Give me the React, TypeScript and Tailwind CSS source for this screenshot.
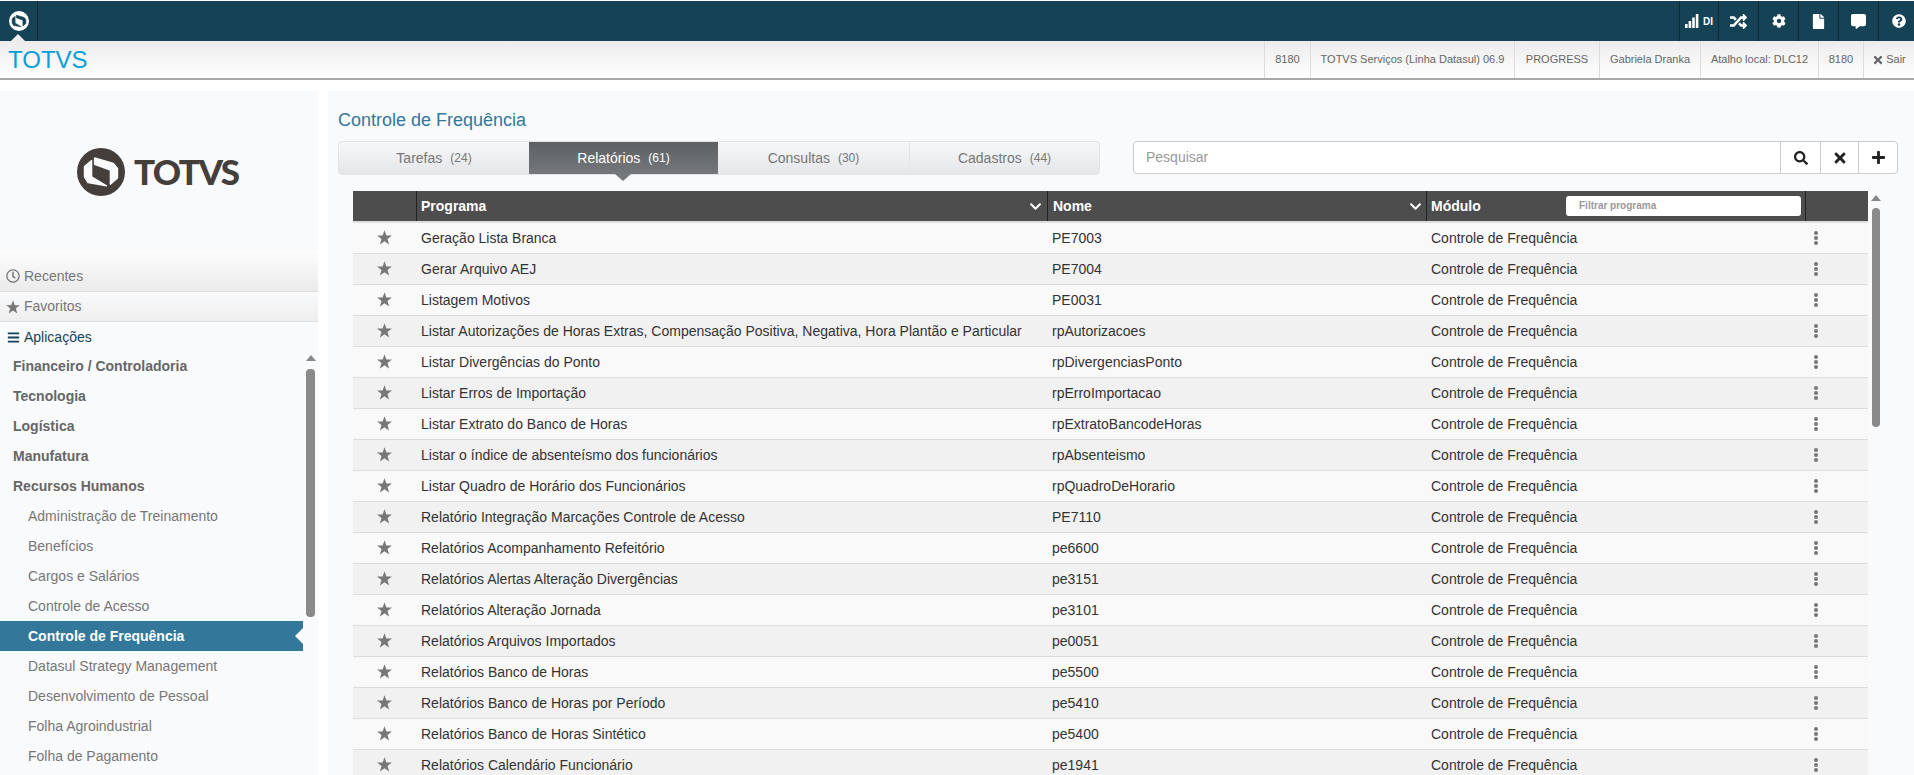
import { FaRegClock, FaBars, FaSearch, FaTimes, FaPlus, FaRandom, FaCog, FaFile, FaCommentAlt, FaQuestionCircle, FaChevronDown } from 'react-icons/fa';

const font = "font-['Liberation_Sans',Arial,sans-serif]";

const rows = [
  ['Geração Lista Branca', 'PE7003'],
  ['Gerar Arquivo AEJ', 'PE7004'],
  ['Listagem Motivos', 'PE0031'],
  ['Listar Autorizações de Horas Extras, Compensação Positiva, Negativa, Hora Plantão e Particular', 'rpAutorizacoes'],
  ['Listar Divergências do Ponto', 'rpDivergenciasPonto'],
  ['Listar Erros de Importação', 'rpErroImportacao'],
  ['Listar Extrato do Banco de Horas', 'rpExtratoBancodeHoras'],
  ['Listar o índice de absenteísmo dos funcionários', 'rpAbsenteismo'],
  ['Listar Quadro de Horário dos Funcionários', 'rpQuadroDeHorario'],
  ['Relatório Integração Marcações Controle de Acesso', 'PE7110'],
  ['Relatórios Acompanhamento Refeitório', 'pe6600'],
  ['Relatórios Alertas Alteração Divergências', 'pe3151'],
  ['Relatórios Alteração Jornada', 'pe3101'],
  ['Relatórios Arquivos Importados', 'pe0051'],
  ['Relatórios Banco de Horas', 'pe5500'],
  ['Relatórios Banco de Horas por Período', 'pe5410'],
  ['Relatórios Banco de Horas Sintético', 'pe5400'],
  ['Relatórios Calendário Funcionário', 'pe1941'],
];

const topGroups = ['Financeiro / Controladoria', 'Tecnologia', 'Logística', 'Manufatura', 'Recursos Humanos'];
const subItems = [
  'Administração de Treinamento',
  'Benefícios',
  'Cargos e Salários',
  'Controle de Acesso',
  'Controle de Frequência',
  'Datasul Strategy Management',
  'Desenvolvimento de Pessoal',
  'Folha Agroindustrial',
  'Folha de Pagamento',
];

const tabs = [
  ['Tarefas', '(24)', 'w-[190px]'],
  ['Relatórios', '(61)', 'w-[189px]'],
  ['Consultas', '(30)', 'w-[191px]'],
  ['Cadastros', '(44)', 'w-[190px]'],
];

const infoCells = [
  ['8180', 'w-[46px]'],
  ['TOTVS Serviços (Linha Datasul) 06.9', 'w-[204px]'],
  ['PROGRESS', 'w-[85px]'],
  ['Gabriela Dranka', 'w-[101px]'],
  ['Atalho local: DLC12', 'w-[118px]'],
  ['8180', 'w-[45px]'],
];

const topIcons = [
  { Icon: FaRandom, size: 'text-[17px]' },
  { Icon: FaCog, size: 'text-[14px]' },
  { Icon: FaFile, size: 'text-[15px]' },
  { Icon: FaCommentAlt, size: 'text-[15px]' },
  { Icon: FaQuestionCircle, size: 'text-[14px]' },
];

function Logo({ className, ring, inner }: { className: string; ring: string; inner: string }) {
  return (
    <svg viewBox="0 0 48 48" className={className}>
      <circle cx="24" cy="24" r="24" fill={ring} />
      <g fill={inner} stroke={inner} strokeWidth="1.4" strokeLinejoin="round">
        <polygon points="7.5,18.5 14.6,12.6 14.6,28.8 29.5,37.8 11,34.6 7.5,29" />
        <polygon points="17.6,10 36.4,15.4 40.5,20.4 40.5,30 33.4,36.2 33.4,22 17.6,16.4" />
      </g>
    </svg>
  );
}

function Star({ className }: { className: string }) {
  return (
    <svg viewBox="0 0 24 24" className={className} fill="currentColor">
      <polygon points="12,0.5 15,8.8 23.8,8.8 16.8,14.2 19.4,23 12,17.8 4.6,23 7.2,14.2 0.2,8.8 9,8.8" />
    </svg>
  );
}

function Scrollbar({ className, thumb, gap }: { className: string; thumb: string; gap: string }) {
  return (
    <div className={`flex flex-col items-center ${className}`}>
      <div className={`mt-[4px] w-0 h-0 border-x-[5px] border-x-transparent border-b-[6px] border-b-[#888] ${gap}`} />
      <div className={`rounded-[4px] bg-[#8a8a8a] ${thumb}`} />
    </div>
  );
}

export default function App() {
  return (
    <div className={`h-[775px] w-[1914px] overflow-hidden bg-white ${font} text-[14px] text-[#333]`}>
      {/* Top bar */}
      <div className="mt-[1px] h-[40px] bg-[#164256] flex justify-between overflow-hidden">
        <div className="relative w-[38px] border-r border-[#0d2a38] flex items-center justify-center pb-[1px]">
          <Logo className="w-[20px] h-[20px]" ring="#ffffff" inner="#164256" />
          <div className="absolute bottom-0 left-[11px] w-0 h-0 border-x-[7px] border-x-transparent border-b-[7px] border-b-[#eeeeee]" />
        </div>
        <div className="flex text-white mr-[-4px]">
          <div className="w-[39px] border-l border-[#0d2a38] flex items-center justify-center gap-[4px]">
            <svg viewBox="0 0 14 14" className="w-[14px] h-[14px]" fill="currentColor">
              <rect x="0" y="10" width="2.6" height="4" />
              <rect x="3.6" y="7" width="2.6" height="7" />
              <rect x="7.2" y="3.5" width="2.6" height="10.5" />
              <rect x="10.8" y="0" width="2.6" height="14" />
            </svg>
            <span className="text-[10px] font-bold">DI</span>
          </div>
          {topIcons.map(({ Icon, size }, i) => (
            <div key={i} className="w-[40px] border-l border-[#0d2a38] flex items-center justify-center">
              <Icon className={size} />
            </div>
          ))}
        </div>
      </div>

      {/* Second header */}
      <div className="h-[39px] border-b-2 border-[#a8a8a8] bg-gradient-to-b from-[#ececec] to-white flex justify-between">
        <div className="pl-[8px] text-[24px] leading-[38px] text-[#0a9fd8]">TOTVS</div>
        <div className="flex text-[11px] text-[#666]">
          {infoCells.map(([label, w], i) => (
            <div key={i} className={`${w} border-l border-[#dcdcdc] flex items-center justify-center`}>{label}</div>
          ))}
          <div className="w-[51px] border-l border-[#dcdcdc] flex items-center justify-center gap-[2px]">
            <FaTimes className="text-[12px]" />
            Sair
          </div>
        </div>
      </div>

      {/* Body */}
      <div className="mt-[11px] flex gap-[10px] h-[684px]">
        {/* Sidebar */}
        <aside className="w-[318px] shrink-0 bg-[#f9fafc] flex flex-col overflow-hidden">
          <div className="h-[159px] shrink-0 flex items-center gap-[9px] pl-[77px] pt-[2px]">
            <Logo className="w-[48px] h-[48px]" ring="#453f3c" inner="#f9fafc" />
            <span className="font-['Lato',sans-serif] font-black text-[35px] leading-none text-[#453f3c] tracking-[-1.6px]">TOTVS</span>
          </div>
          <div className="h-[42px] shrink-0 border-b border-[#dddddd] bg-gradient-to-b from-[#fdfdfe] to-[#ebebeb] flex items-center gap-[4px] pl-[6px] pt-[11px] text-[#777]">
            <FaRegClock className="text-[14px]" />
            Recentes
          </div>
          <div className="h-[30px] shrink-0 border-b border-[#dddddd] bg-gradient-to-b from-[#f9fafc] to-[#eeeeee] flex items-center gap-[4px] pl-[6px] text-[#777]">
            <Star className="w-[14px] h-[14px]" />
            Favoritos
          </div>
          <div className="h-[29px] shrink-0 flex items-center gap-[4px] pl-[7px] pt-[1px] text-[#164256]">
            <FaBars className="text-[13px]" />
            Aplicações
          </div>
          <div className="flex flex-1 min-h-0">
            <ul className="w-[303px] shrink-0">
              {topGroups.map((g) => (
                <li key={g} className="h-[30px] leading-[30px] pl-[13px] font-bold text-[#666]">{g}</li>
              ))}
              {subItems.map((s) => {
                const active = s === 'Controle de Frequência';
                return (
                  <li
                    key={s}
                    className={`relative h-[30px] leading-[30px] pl-[28px] ${active ? 'bg-[#33779b] font-bold text-white' : 'text-[#777]'}`}
                  >
                    {s}
                    {active && (
                      <span className="absolute right-0 top-[7px] w-0 h-0 border-y-[8px] border-y-transparent border-r-[8px] border-r-[#f9fafc]" />
                    )}
                  </li>
                );
              })}
            </ul>
            <Scrollbar className="w-[15px]" thumb="w-[9px] h-[248px]" gap="mb-[8px]" />
          </div>
        </aside>

        {/* Main panel */}
        <main className="flex-1 bg-[#f9fafc] pl-[10px] min-w-0 overflow-hidden">
          <h1 className="mt-[17px] h-[33px] text-[18px] leading-[24px] text-[#33779b]">Controle de Frequência</h1>
          <div className="flex h-[34px]">
            <div className="flex w-[762px] rounded-[4px] border border-[#e2e4e6] bg-gradient-to-b from-[#f6f7f8] to-[#e4e6e9]">
              {tabs.map(([label, count, w], i) =>
                i === 1 ? (
                  <div key={label} className={`relative ${w} bg-gradient-to-b from-[#5d6163] to-[#74787c] flex items-center justify-center gap-[8px] text-white`}>
                    {label}
                    <span className="text-[12px]">{count}</span>
                    <span className="absolute left-[86px] top-full w-0 h-0 border-x-[8px] border-x-transparent border-t-[7px] border-t-[#74787c]" />
                  </div>
                ) : (
                  <div key={label} className={`${w} ${i === 3 ? 'border-l border-[#e2e4e6]' : ''} flex items-center justify-center gap-[8px] text-[#777]`}>
                    {label}
                    <span className="text-[12px]">{count}</span>
                  </div>
                ),
              )}
            </div>
            <div className="ml-[33px] flex w-[765px] h-[33px] rounded-[4px] border border-[#cccccc] bg-white text-[#222]">
              <div className="flex-1 pl-[12px] leading-[31px] text-[#999]">Pesquisar</div>
              <div className="w-[40px] border-l border-[#cccccc] flex items-center justify-center"><FaSearch className="text-[14px]" /></div>
              <div className="w-[38px] border-l border-[#cccccc] flex items-center justify-center"><FaTimes className="text-[16px]" /></div>
              <div className="w-[39px] border-l border-[#cccccc] flex items-center justify-center"><FaPlus className="text-[15px]" /></div>
            </div>
          </div>

          <div className="mt-[16px] ml-[15px] flex">
            <div className="w-[1515px] shrink-0">
              {/* Table head */}
              <div className="h-[32px] border-b-2 border-[#dddddd] bg-[#4d4d4d] flex text-white font-bold">
                <div className="w-[64px] border-r border-[#222]" />
                <div className="w-[631px] border-r border-[#222] flex items-center justify-between pl-[4px] pr-[5px]">
                  Programa
                  <FaChevronDown className="text-[13px]" />
                </div>
                <div className="w-[379px] border-r border-[#222] flex items-center justify-between pl-[5px] pr-[4px]">
                  Nome
                  <FaChevronDown className="text-[13px]" />
                </div>
                <div className="w-[379px] border-r border-[#222] flex items-center justify-between pl-[4px] pr-[4px]">
                  Módulo
                  <div className="w-[235px] h-[20px] rounded-[3px] bg-white pl-[13px] text-[10px] leading-[20px] text-[#999]">Filtrar programa</div>
                </div>
                <div className="flex-1" />
              </div>
              {/* Rows */}
              {rows.map(([name, code], i) => (
                <div key={code} className={`h-[31px] border-b border-[#dddddd] flex items-center ${i % 2 === 0 ? 'bg-[#f9f9f9]' : 'bg-[#f1f1f1]'}`}>
                  <div className="w-[63px] flex justify-center text-[#777] pb-[2px]"><Star className="w-[15px] h-[15px]" /></div>
                  <div className="w-[636px] pl-[5px]">{name}</div>
                  <div className="w-[379px]">{code}</div>
                  <div className="w-[373px]">Controle de Frequência</div>
                  <div className="w-[24px] flex flex-col items-center gap-[1px]">
                    <span className="w-[4px] h-[4px] rounded-full bg-[#777]" />
                    <span className="w-[4px] h-[4px] rounded-full bg-[#777]" />
                    <span className="w-[4px] h-[4px] rounded-full bg-[#777]" />
                  </div>
                </div>
              ))}
            </div>
            <Scrollbar className="w-[16px]" thumb="w-[8px] h-[219px]" gap="mb-[7px]" />
          </div>
        </main>
      </div>
    </div>
  );
}
